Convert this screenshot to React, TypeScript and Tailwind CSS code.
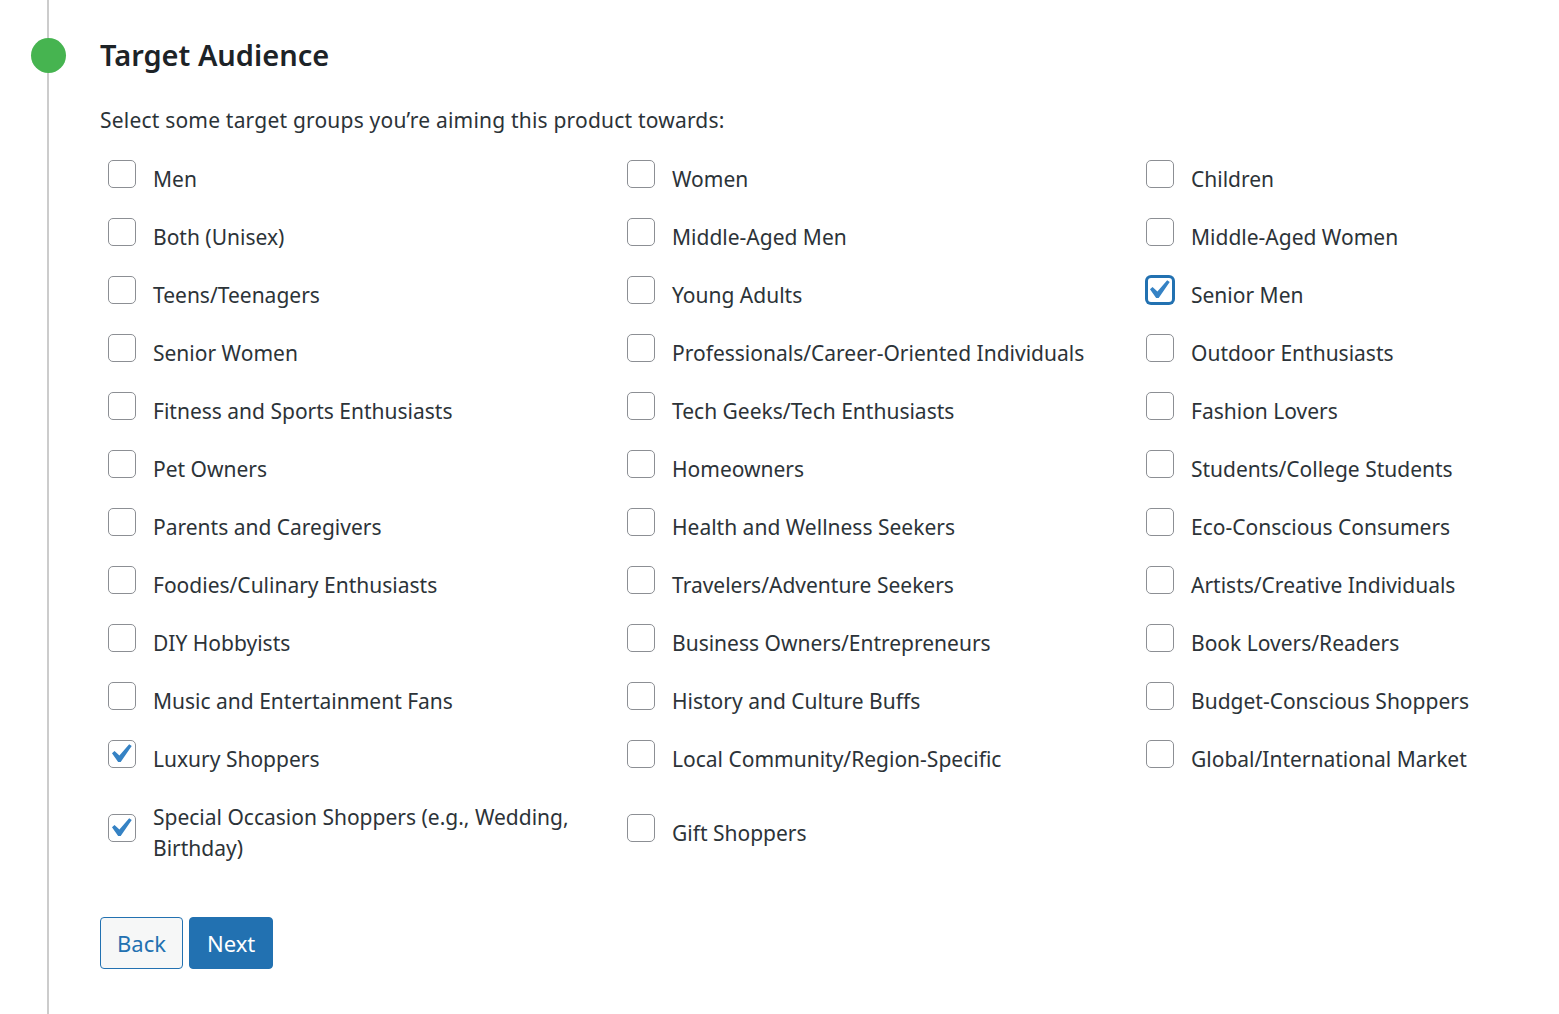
const groups: [string, boolean][] = [
  ["Men", false],
  ["Women", false],
  ["Children", false],
  ["Both (Unisex)", false],
  ["Middle-Aged Men", false],
  ["Middle-Aged Women", false],
  ["Teens/Teenagers", false],
  ["Young Adults", false],
  ["Senior Men", true],
  ["Senior Women", false],
  ["Professionals/Career-Oriented Individuals", false],
  ["Outdoor Enthusiasts", false],
  ["Fitness and Sports Enthusiasts", false],
  ["Tech Geeks/Tech Enthusiasts", false],
  ["Fashion Lovers", false],
  ["Pet Owners", false],
  ["Homeowners", false],
  ["Students/College Students", false],
  ["Parents and Caregivers", false],
  ["Health and Wellness Seekers", false],
  ["Eco-Conscious Consumers", false],
  ["Foodies/Culinary Enthusiasts", false],
  ["Travelers/Adventure Seekers", false],
  ["Artists/Creative Individuals", false],
  ["DIY Hobbyists", false],
  ["Business Owners/Entrepreneurs", false],
  ["Book Lovers/Readers", false],
  ["Music and Entertainment Fans", false],
  ["History and Culture Buffs", false],
  ["Budget-Conscious Shoppers", false],
  ["Luxury Shoppers", true],
  ["Local Community/Region-Specific", false],
  ["Global/International Market", false],
  ["Special Occasion Shoppers (e.g., Wedding, Birthday)", true],
  ["Gift Shoppers", false],
];

// the one with keyboard focus
const FOCUSED = "Senior Men";

const Checkbox = ({ checked, focused }: { checked: boolean; focused: boolean }) => (
  <span
    className={`relative -mt-[11px] ml-2 block h-[28px] w-[28px] shrink-0 rounded-[5px] bg-white ${
      focused
        ? "border-2 border-[#2271b1] shadow-[0_0_0_1px_#2271b1]"
        : "border border-[#8c8f94]"
    }`}
  >
    {checked && (
      <svg
        viewBox="0 0 20 20"
        className={`absolute h-[38px] w-[38px] ${
          focused ? "left-[-9px] top-[-7px]" : "left-[-8px] top-[-6px]"
        }`}
      >
        <path
          d="M14.83 4.89l1.34.94-5.81 8.38H9.02L5.78 9.67l1.34-1.25 2.57 2.4z"
          fill="#3582c4"
        />
      </svg>
    )}
  </span>
);

export default function App() {
  return (
    <div className="relative min-h-screen bg-white font-['Noto_Sans',sans-serif] text-[#2c3338]">
      {/* timeline rail + step dot */}
      <div className="absolute bottom-0 left-[47px] top-0 w-[2px] bg-[#cccccc]" />
      <div className="absolute left-[31px] top-[38px] h-[35px] w-[35px] rounded-full bg-[#46b450]" />

      <div className="pl-[100px] pt-[33px]">
        <h2 className="text-[29px] font-semibold leading-[44px] text-[#1d2327]">
          Target Audience
        </h2>
        <p className="mt-[28px] text-[21px] leading-[31px] tracking-[0.2px]">
          Select some target groups you’re aiming this product towards:
        </p>

        <div className="mt-[28px] grid grid-cols-[519px_519px_1fr] gap-y-[27px]">
          {groups.map(([label, checked]) => (
            <label key={label} className="flex items-center gap-[17px] pr-6">
              <Checkbox checked={checked} focused={label === FOCUSED} />
              <span className="text-[21px] leading-[31px]">{label}</span>
            </label>
          ))}
        </div>

        <div className="mt-[53px] flex gap-[6px] pb-10">
          <button className="h-[52px] rounded-[4px] border border-[#2271b1] bg-[#f6f7f7] px-[16px] text-[22px] text-[#2271b1]">
            Back
          </button>
          <button className="h-[52px] rounded-[4px] border border-[#2271b1] bg-[#2271b1] px-[17px] text-[22px] text-white">
            Next
          </button>
        </div>
      </div>
    </div>
  );
}
